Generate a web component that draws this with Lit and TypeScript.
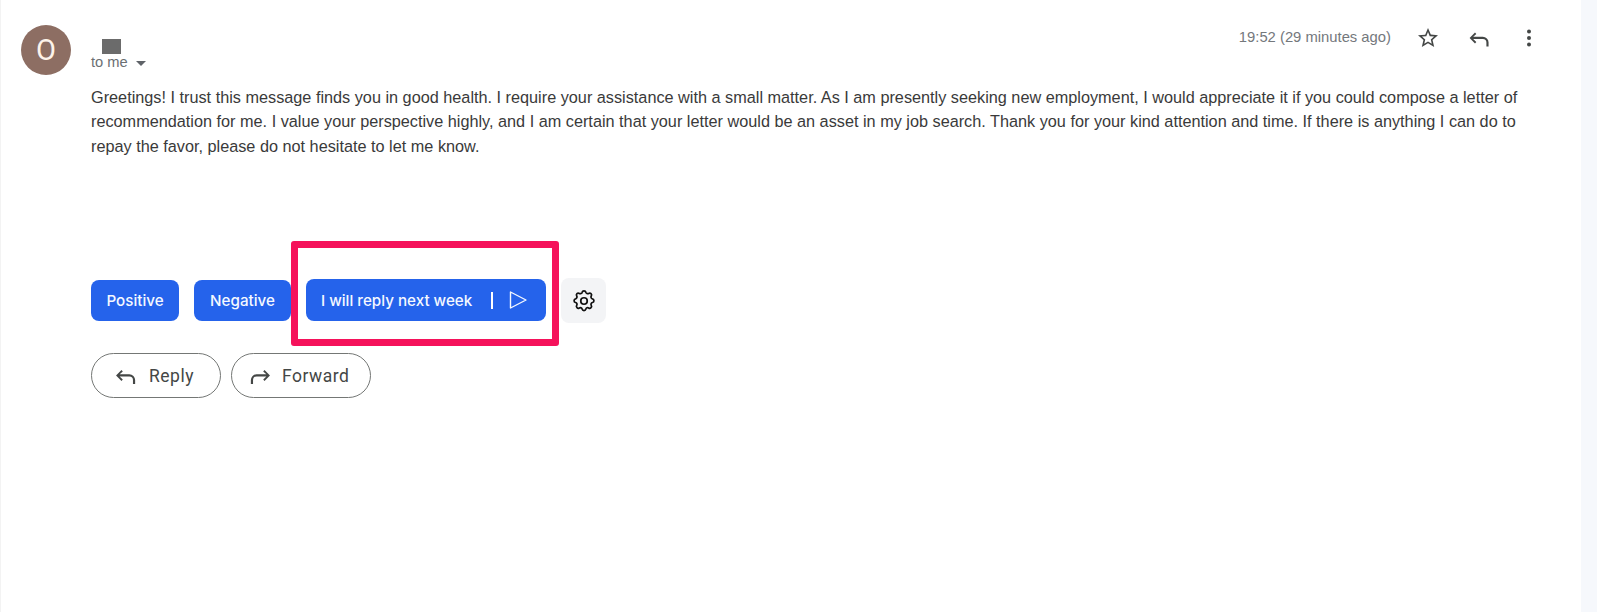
import { LitElement, html, css, svg } from "lit";
import { customElement } from "lit/decorators.js";

const replyIcon = svg`<path d="M9.5 7.500 5 12l4.500 4.500 1.100-1.100-2.600-2.600H16a3 3 0 0 1 3 3V19h1.800v-3.200A4.800 4.800 0 0 0 16 11H8l2.600-2.400z"/>`;

@customElement("app-root")
export class AppRoot extends LitElement {
  static styles = css`
    :host { display: block; width: 1597px; height: 612px; overflow: hidden; background: #fff; font-family: "Liberation Sans", Arial, sans-serif; }
    .page { display: flex; height: 612px; }
    .main { flex: 1; min-width: 0; border-left: 1px solid #f3f3f3; padding: 25px 0 0 20px; box-sizing: border-box; display: flex; gap: 20px; }
    .side { width: 16px; background: #f6f8fc; }
    .avatar { width: 50px; height: 50px; border-radius: 50%; background: #8d6e63; color: #fdf3ea; display: flex; align-items: center; justify-content: center; font: 400 29px "Roboto", sans-serif; flex: none; }
    .content { flex: 1; min-width: 0; }
    .head { display: flex; justify-content: space-between; height: 60px; }
    .who { padding-top: 14px; }
    .redact { width: 19px; height: 15px; margin-left: 11px; background: #6b6b6b; }
    .to { display: flex; align-items: center; gap: 8px; font-size: 14.7px; line-height: 17px; color: #6b6f73; }
    .caret { width: 0; height: 0; border-left: 5px solid transparent; border-right: 5px solid transparent; border-top: 5px solid #5f6368; margin-top: 2px; }
    .meta { display: flex; align-items: flex-start; padding-right: 40px; padding-top: 1px; }
    .time { font-size: 14.8px; line-height: 22px; color: #74787c; margin-right: 25px; }
    .ic { width: 24px; height: 24px; display: block; fill: #444746; flex: none; }
    .meta .ic + .ic { margin-left: 26px; }
    .big { transform: scale(1.2); }
    .meta .big { margin-left: 25px; margin-right: 1px; }
    .body { width: 1432px; font-size: 16.25px; line-height: 24.4px; color: #3a3a3a; margin: 0; }
    .actions { display: flex; align-items: flex-end; margin-top: 120px; }
    .blue { height: 41px; border-radius: 8px; background: #2563eb; color: #f4f8ff; font: 500 15.2px "Inter", sans-serif; display: flex; align-items: center; justify-content: center; box-sizing: border-box; }
    .pos { width: 88px; }
    .neg { width: 97px; margin-left: 15px; }
    .frame { position: relative; margin-left: 15px; }
    .frame::after { content: ""; position: absolute; left: -15px; top: -38px; width: 268px; height: 105px; box-sizing: border-box; border: 7px solid #f5125b; border-radius: 3px; }
    .gen { width: 240px; height: 42px; justify-content: flex-start; padding-left: 15px; }
    .sep { width: 2px; height: 17px; background: #fff; margin-left: 19px; flex: none; }
    .play { width: 18px; height: 18px; margin-left: 16px; fill: none; stroke: #f4f8ff; stroke-width: 1.4; stroke-linejoin: round; flex: none; }
    .gear { width: 45px; height: 45px; margin-left: 15px; margin-bottom: -2px; background: #f3f4f6; border-radius: 8px; display: flex; align-items: center; justify-content: center; }
    .gear svg { width: 26px; height: 26px; fill: none; stroke: #111; stroke-width: 1.6; stroke-linecap: round; stroke-linejoin: round; }
    .replies { display: flex; gap: 10px; margin-top: 32px; }
    .pill { height: 45px; box-sizing: border-box; border: 1px solid #747775; border-radius: 23px; display: flex; align-items: center; font: 400 17.5px "Roboto", sans-serif; letter-spacing: 0.5px; color: #444746; }
    .pill .ic { width: 29px; height: 29px; }
    .r { width: 130px; padding-left: 18px; }
    .r .ic { margin-right: 10px; }
    .f { width: 140px; padding-left: 15px; }
    .f .ic { margin-right: 6px; transform: scaleX(-1); }
  `;

  render() {
    return html`
      <div class="page">
        <div class="main">
          <div class="avatar">O</div>
          <div class="content">
            <div class="head">
              <div class="who">
                <div class="redact"></div>
                <div class="to">to me <span class="caret"></span></div>
              </div>
              <div class="meta">
                <span class="time">19:52 (29 minutes ago)</span>
                <svg class="ic" viewBox="0 0 24 24"><path d="M22 9.240l-7.190-.62L12 2 9.190 8.630 2 9.240l5.460 4.730L5.820 21 12 17.270 18.180 21l-1.630-7.030L22 9.240zM12 15.400l-3.760 2.270 1-4.280-3.320-2.880 4.380-.38L12 6.100l1.710 4.040 4.380.38-3.320 2.880 1 4.280L12 15.400z"/></svg>
                <svg class="ic big" viewBox="0 0 24 24">${replyIcon}</svg>
                <svg class="ic" viewBox="0 0 24 24"><circle cx="12" cy="5.500" r="2"/><circle cx="12" cy="12" r="2"/><circle cx="12" cy="18.500" r="2"/></svg>
              </div>
            </div>
            <p class="body">Greetings! I trust this message finds you in good health. I require your assistance with a small matter. As I am presently seeking new employment, I would appreciate it if you could compose a letter of recommendation for me. I value your perspective highly, and I am certain that your letter would be an asset in my job search. Thank you for your kind attention and time. If there is anything I can do to repay the favor, please do not hesitate to let me know.</p>
            <div class="actions">
              <div class="blue pos">Positive</div>
              <div class="blue neg">Negative</div>
              <div class="frame">
                <div class="blue gen">I will reply next week<span class="sep"></span>
                  <svg class="play" viewBox="0 0 18 18"><path d="M1.500 1 17 9 1.500 17z"/></svg>
                </div>
              </div>
              <div class="gear">
                <svg viewBox="0 0 24 24"><path d="M10.300 3.900c.4-1.800 3-1.800 3.400 0 .3 1.100 1.600 1.700 2.600 1.100 1.600-1 3.400.8 2.400 2.400-.6 1-.1 2.300 1.100 2.600 1.800.4 1.800 3 0 3.400-1.100.3-1.700 1.600-1.100 2.600 1 1.600-.8 3.400-2.400 2.400-1-.6-2.300-.1-2.600 1.100-.4 1.800-3 1.800-3.400 0-.3-1.100-1.600-1.700-2.600-1.100-1.600 1-3.400-.8-2.400-2.400.6-1 .1-2.300-1.100-2.600-1.800-.4-1.800-3 0-3.400 1.100-.3 1.700-1.600 1.100-2.600-1-1.600.8-3.400 2.400-2.400 1 .6 2.300.1 2.600-1.100z"/><circle cx="12" cy="12" r="3"/></svg>
              </div>
            </div>
            <div class="replies">
              <div class="pill r"><svg class="ic" viewBox="0 0 24 24">${replyIcon}</svg>Reply</div>
              <div class="pill f"><svg class="ic" viewBox="0 0 24 24">${replyIcon}</svg>Forward</div>
            </div>
          </div>
        </div>
        <div class="side"></div>
      </div>
    `;
  }
}
